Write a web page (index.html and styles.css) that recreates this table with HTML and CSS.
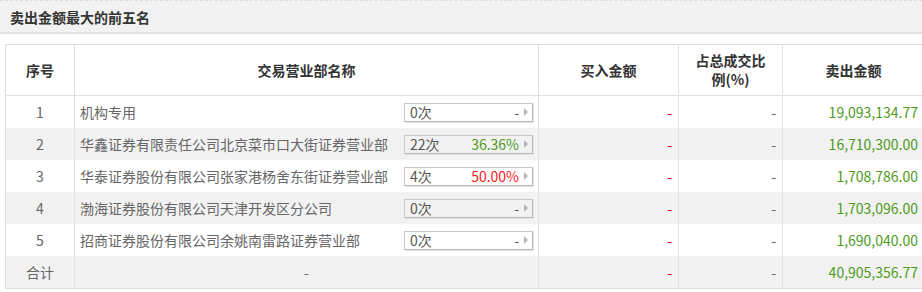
FILE: index.html
```html
<!DOCTYPE html>
<html lang="zh-CN">
<head>
<meta charset="utf-8">
<title>卖出金额最大的前五名</title>
<link rel="stylesheet" href="styles.css">
</head>
<body>
<div class="page">
  <div class="title-bar"><span class="title">卖出金额最大的前五名</span></div>
  <table class="rank">
    <colgroup>
      <col class="c-no"><col class="c-name"><col class="c-buy"><col class="c-pct"><col class="c-sell">
    </colgroup>
    <thead>
      <tr>
        <th>序号</th>
        <th>交易营业部名称</th>
        <th>买入金额</th>
        <th class="two">占总成交比<br>例(%)</th>
        <th>卖出金额</th>
      </tr>
    </thead>
    <tbody>
      <tr>
        <td class="no">1</td>
        <td><div class="name-cell"><span class="name">机构专用</span><span class="box"><span class="cnt">0次</span><span class="rate">-</span><span class="arrow"></span></span></div></td>
        <td class="num red">-</td>
        <td class="num">-</td>
        <td class="num green">19,093,134.77</td>
      </tr>
      <tr class="alt">
        <td class="no">2</td>
        <td><div class="name-cell"><span class="name">华鑫证券有限责任公司北京菜市口大街证券营业部</span><span class="box"><span class="cnt">22次</span><span class="rate green">36.36%</span><span class="arrow"></span></span></div></td>
        <td class="num red">-</td>
        <td class="num">-</td>
        <td class="num green">16,710,300.00</td>
      </tr>
      <tr>
        <td class="no">3</td>
        <td><div class="name-cell"><span class="name">华泰证券股份有限公司张家港杨舍东街证券营业部</span><span class="box"><span class="cnt">4次</span><span class="rate red">50.00%</span><span class="arrow"></span></span></div></td>
        <td class="num red">-</td>
        <td class="num">-</td>
        <td class="num green">1,708,786.00</td>
      </tr>
      <tr class="alt">
        <td class="no">4</td>
        <td><div class="name-cell"><span class="name">渤海证券股份有限公司天津开发区分公司</span><span class="box"><span class="cnt">0次</span><span class="rate">-</span><span class="arrow"></span></span></div></td>
        <td class="num red">-</td>
        <td class="num">-</td>
        <td class="num green">1,703,096.00</td>
      </tr>
      <tr>
        <td class="no">5</td>
        <td><div class="name-cell"><span class="name">招商证券股份有限公司余姚南雷路证券营业部</span><span class="box"><span class="cnt">0次</span><span class="rate">-</span><span class="arrow"></span></span></div></td>
        <td class="num red">-</td>
        <td class="num">-</td>
        <td class="num green">1,690,040.00</td>
      </tr>
      <tr class="alt">
        <td class="no">合计</td>
        <td class="center">-</td>
        <td class="num red">-</td>
        <td class="num">-</td>
        <td class="num green">40,905,356.77</td>
      </tr>
    </tbody>
  </table>
</div>
</body>
</html>
```
FILE: styles.css
```css
html, body {
  margin: 0;
  padding: 0;
  background: #fff;
}
body {
  font-family: "Noto Sans CJK SC", "Microsoft YaHei", sans-serif;
  font-size: 14px;
  color: #666;
}
.page {
  width: 922px;
  height: 292px;
  overflow: hidden;
}
.title-bar {
  box-sizing: border-box;
  height: 34px;
  border-top: 1px dashed #dcdcdc;
  border-bottom: 2px solid #e2e2e2;
  background: #f2f2f2;
  padding-left: 10px;
  display: flex;
  align-items: center;
}
.title {
  font-size: 14px;
  font-weight: bold;
  color: #333;
  line-height: 18px;
}
.rank {
  margin: 10px 0 0 5px;
  width: 919px;
  border-collapse: collapse;
  table-layout: fixed;
  border: 1px solid #e0e0e0;
}
.c-no { width: 69px; }
.c-name { width: 464px; }
.c-buy { width: 140px; }
.c-pct { width: 104px; }
.c-sell { width: 142px; }
.rank th {
  height: 50px;
  padding: 0;
  font-weight: bold;
  color: #333;
  line-height: 18px;
  text-align: center;
  border-left: 1px solid #e0e0e0;
  border-bottom: 1px solid #e0e0e0;
}
.rank th.two { line-height: 19px; }
.rank td {
  height: 32px;
  padding: 0;
  line-height: 18px;
  border-left: 1px solid #e0e0e0;
  vertical-align: middle;
}
.rank tr.alt td { background: #f2f2f2; }
.rank td.no, .rank td.center { text-align: center; }
.rank td.num { text-align: right; padding-right: 6px; }
.name-cell {
  display: flex;
  align-items: center;
  justify-content: space-between;
  padding: 0 5px;
}
.name { color: #666; }
.box {
  width: 129px;
  height: 19px;
  box-sizing: border-box;
  border: 1px solid #c8c8c8;
  border-right-color: #b8b8b8;
  border-bottom-color: #b8b8b8;
  box-shadow: 1px 1px 0 #e4e4e4;
  display: flex;
  align-items: center;
  padding: 0 4px 0 5px;
  color: #555;
  line-height: 17px;
}
.cnt { flex: 1; }
.rate { color: #555; margin-right: 5px; }
.arrow {
  width: 0;
  height: 0;
  border-top: 4px solid transparent;
  border-bottom: 4px solid transparent;
  border-left: 4px solid #b4b4b4;
}
.red { color: #ff0000; }
.green { color: #4e9a1c; }
.rate.red { color: #ff1a1a; }
.rate.green { color: #4e9a1c; }
```
